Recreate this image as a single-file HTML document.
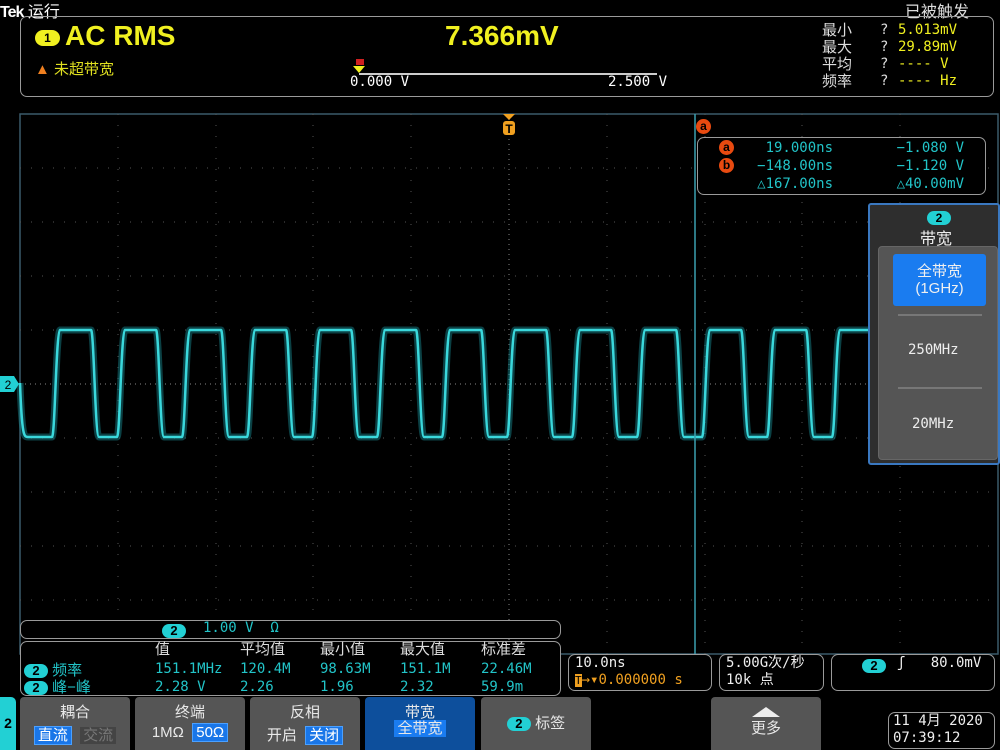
<!DOCTYPE html>
<html><head><meta charset="utf-8"><style>
*{margin:0;padding:0;box-sizing:border-box}
body{width:1000px;height:750px;background:#000;overflow:hidden;position:relative;font-family:"Liberation Sans","Noto Sans CJK SC",sans-serif;color:#ddd}
.a{position:absolute;white-space:nowrap}
.box{position:absolute;border:1.5px solid #9a9a9a;border-radius:7px}
.y{color:#f0f020}
.c{color:#22c4c8}
.pill{display:inline-block;background:#22d0d4;color:#000;border-radius:8px;font-weight:bold;text-align:center;font-size:13px;line-height:14px;width:24px}
.btn{position:absolute;top:697px;height:53px;background:#555;border-radius:4px 4px 0 0;color:#e8e8e8;font-size:15px;text-align:center}
.sel{background:#1976e8;color:#fff;border:1px solid #4aa0ff;padding:0 3px}
.mono{font-family:"DejaVu Sans Mono","Liberation Mono",monospace}
.cur{position:absolute;width:15px;height:15px;border-radius:50%;background:#e84a10;color:#000;font-weight:bold;font-size:12px;text-align:center;line-height:14px}
</style></head><body>
<div class="a" style="left:0;top:-2px;font-size:16px;color:#fff"><b style="letter-spacing:-1px">Tek</b> 运行</div>
<div class="a" style="left:905px;top:-2px;font-size:16px;color:#ddd">已被触发</div>
<div class="box" style="left:20px;top:16px;width:974px;height:81px"></div>
<div class="a y" style="left:35px;top:30px;width:25px;height:16px;background:#f0f020;border-radius:8px;color:#000;font-size:12px;text-align:center;font-weight:bold;line-height:16px">1</div>
<div class="a y" style="left:65px;top:20px;font-size:28px;font-weight:bold">AC RMS</div>
<div class="a y" style="left:445px;top:20px;font-size:28px;font-weight:bold">7.366mV</div>
<div class="a" style="left:35px;top:58px;font-size:15px;color:#e0e020"><span style="color:#f08020">▲</span> 未超带宽</div>
<div class="a" style="left:356px;top:59px;width:8px;height:6px;background:#d02020"></div>
<div class="a" style="left:353px;top:66px;width:0;height:0;border-left:6px solid transparent;border-right:6px solid transparent;border-top:7px solid #f0f020"></div>
<div class="a" style="left:359px;top:73px;width:298px;height:2px;background:#ccc"></div>
<div class="a mono" style="left:350px;top:74px;font-size:14px;color:#fff">0.000 V</div>
<div class="a mono" style="left:608px;top:74px;font-size:14px;color:#fff">2.500 V</div>
<div class="a" style="left:822px;top:22px;font-size:15px;line-height:17px;color:#ddd">最小<br>最大<br>平均<br>频率</div>
<div class="a mono" style="left:880px;top:22px;font-size:14px;line-height:17px;color:#ddd">?<br>?<br>?<br>?</div>
<div class="a mono y" style="left:898px;top:22px;font-size:14px;line-height:17px">5.013mV<br>29.89mV<br>---- V<br>---- Hz</div>
<svg class="a" style="left:0;top:0" width="1000" height="750">
<defs>
<path id="w" fill="none" d="M20,383 C22,437 24,437 28,437 L52,437 C55,437 56,332 60,330 L91,330 C94,330 95,437 99,437 L117,437 C120,437 121,332 125,330 L156,330 C159,330 160,437 164,437 L182,437 C185,437 186,332 190,330 L221,330 C224,330 225,437 229,437 L247,437 C250,437 251,332 255,330 L286,330 C289,330 290,437 294,437 L312,437 C315,437 316,332 320,330 L351,330 C354,330 355,437 359,437 L377,437 C380,437 381,332 385,330 L416,330 C419,330 420,437 424,437 L442,437 C445,437 446,332 450,330 L481,330 C484,330 485,437 489,437 L507,437 C510,437 511,332 515,330 L546,330 C549,330 550,437 554,437 L572,437 C575,437 576,332 580,330 L611,330 C614,330 615,437 619,437 L637,437 C640,437 641,332 645,330 L676,330 C679,330 680,437 684,437 L702,437 C705,437 706,332 710,330 L741,330 C744,330 745,437 749,437 L767,437 C770,437 771,332 775,330 L806,330 C809,330 810,437 814,437 L832,437 C835,437 836,332 840,330 L871,330"/>
</defs>
<rect x="20" y="114" width="978" height="540" fill="none" stroke="#3a5a6a" stroke-width="1.5"/>
<g stroke="#555" stroke-width="1" stroke-dasharray="1 10">
<line x1="118" y1="114" x2="118" y2="654"/><line x1="216" y1="114" x2="216" y2="654"/><line x1="313" y1="114" x2="313" y2="654"/><line x1="411" y1="114" x2="411" y2="654"/><line x1="607" y1="114" x2="607" y2="654"/><line x1="705" y1="114" x2="705" y2="654"/><line x1="802" y1="114" x2="802" y2="654"/><line x1="900" y1="114" x2="900" y2="654"/>
<line x1="20" y1="168" x2="998" y2="168"/><line x1="20" y1="222" x2="998" y2="222"/><line x1="20" y1="276" x2="998" y2="276"/><line x1="20" y1="330" x2="998" y2="330"/><line x1="20" y1="438" x2="998" y2="438"/><line x1="20" y1="492" x2="998" y2="492"/><line x1="20" y1="546" x2="998" y2="546"/><line x1="20" y1="600" x2="998" y2="600"/>
</g>
<g stroke="#888" stroke-width="1" stroke-dasharray="1 4">
<line x1="509" y1="114" x2="509" y2="654"/><line x1="20" y1="384" x2="998" y2="384"/>
</g>
<use href="#w" stroke="#168088" stroke-width="7" opacity="0.5"/>
<use href="#w" stroke="#3ad8dc" stroke-width="2.5"/>
<line x1="695" y1="114" x2="695" y2="654" stroke="#3aa0b0" stroke-width="1.5"/>
<path d="M503,114 L515,114 L509,120Z" fill="#f0a020"/>
<rect x="503" y="121" width="12" height="14" rx="3" fill="#f0a020"/>
<text x="509" y="133" font-size="12" font-weight="bold" text-anchor="middle" fill="#000" font-family="Liberation Sans">T</text>
<path d="M0,376 L14,376 L19,384 L14,392 L0,392Z" fill="#22d0d4"/>
<text x="8" y="389" font-size="12" text-anchor="middle" fill="#000" font-family="Liberation Sans">2</text>
</svg>
<div class="cur" style="left:696px;top:119px">a</div>
<div class="box" style="left:697px;top:137px;width:289px;height:58px;background:#000"></div>
<div class="cur" style="left:719px;top:140px">a</div>
<div class="cur" style="left:719px;top:158px">b</div>
<div class="a c mono" style="left:750px;top:139px;font-size:14px;line-height:18px;text-align:right;width:83px">19.000ns<br>−148.00ns<br>△167.00ns</div>
<div class="a c mono" style="left:880px;top:139px;font-size:14px;line-height:18px;text-align:right;width:84px">−1.080 V<br>−1.120 V<br>△40.00mV</div>
<div class="a" style="left:868px;top:203px;width:132px;height:262px;background:#2e2e2e;border:2px solid #3a78c0;border-radius:3px"></div>
<div class="a" style="left:927px;top:211px;width:24px;height:14px;border-radius:7px;background:#22d0d4;color:#000;font-size:12px;font-weight:bold;text-align:center;line-height:14px">2</div>
<div class="a" style="left:920px;top:225px;font-size:16px;color:#eee">带宽</div>
<div class="a" style="left:878px;top:246px;width:120px;height:214px;background:#555;border-radius:4px;border:1px solid #666"></div>
<div class="a" style="left:893px;top:254px;width:93px;height:52px;background:#1a7cf0;border-radius:3px;color:#f0f0f0;font-size:15px;text-align:center;line-height:17px;padding-top:9px">全带宽<br>(1GHz)</div>
<div class="a" style="left:898px;top:314px;width:84px;height:2px;background:#777"></div>
<div class="a" style="left:898px;top:387px;width:84px;height:2px;background:#777"></div>
<div class="a mono" style="left:908px;top:342px;font-size:14px;color:#eee">250MHz</div>
<div class="a mono" style="left:912px;top:416px;font-size:14px;color:#eee">20MHz</div>
<div class="box" style="left:20px;top:620px;width:541px;height:19px;background:#000"></div>
<div class="a" style="left:162px;top:622px"><span class="pill">2</span></div>
<div class="a c mono" style="left:203px;top:620px;font-size:14px">1.00 V &nbsp;Ω</div>
<div class="box" style="left:20px;top:641px;width:541px;height:55px;background:#000"></div>
<div class="a" style="left:24px;top:662px;line-height:17px"><span class="pill">2</span><span class="c" style="font-size:15px"> 频率</span><br><span class="pill">2</span><span class="c" style="font-size:15px"> 峰−峰</span></div>
<div class="a" style="left:155px;top:642px;font-size:15px;color:#ddd;line-height:16px">值</div>
<div class="a" style="left:240px;top:642px;font-size:15px;color:#ddd;line-height:16px">平均值</div>
<div class="a" style="left:320px;top:642px;font-size:15px;color:#ddd;line-height:16px">最小值</div>
<div class="a" style="left:400px;top:642px;font-size:15px;color:#ddd;line-height:16px">最大值</div>
<div class="a" style="left:481px;top:642px;font-size:15px;color:#ddd;line-height:16px">标准差</div>
<div class="a c mono" style="left:155px;top:660px;font-size:14px;line-height:18px">151.1MHz<br>2.28 V</div>
<div class="a c mono" style="left:240px;top:660px;font-size:14px;line-height:18px">120.4M<br>2.26</div>
<div class="a c mono" style="left:320px;top:660px;font-size:14px;line-height:18px">98.63M<br>1.96</div>
<div class="a c mono" style="left:400px;top:660px;font-size:14px;line-height:18px">151.1M<br>2.32</div>
<div class="a c mono" style="left:481px;top:660px;font-size:14px;line-height:18px">22.46M<br>59.9m</div>
<div class="box" style="left:568px;top:654px;width:144px;height:37px"></div>
<div class="a mono" style="left:575px;top:655px;font-size:14px;line-height:17px;color:#eee">10.0ns<br><span style="color:#f0a020"><span style="background:#f0a020;color:#000;font-size:11px">T</span>→▾0.000000 s</span></div>
<div class="box" style="left:719px;top:654px;width:105px;height:37px"></div>
<div class="a mono" style="left:726px;top:655px;font-size:14px;line-height:17px;color:#eee">5.00G次/秒<br>10k 点</div>
<div class="box" style="left:831px;top:654px;width:164px;height:37px"></div>
<div class="a" style="left:862px;top:657px"><span class="pill">2</span></div>
<div class="a mono" style="left:897px;top:655px;font-size:14px;color:#eee">ʃ &nbsp;&nbsp;80.0mV</div>
<div class="a" style="left:0;top:697px;width:16px;height:53px;background:#22d0d4;border-radius:0 5px 0 0;color:#000;font-weight:bold;font-size:14px;text-align:center;line-height:53px">2</div>
<div class="btn" style="left:20px;width:110px"><div style="margin-top:4px">耦合</div><div style="margin-top:2px"><span class="sel">直流</span> &nbsp;<span style="background:#444;color:#777;padding:0 3px">交流</span></div></div>
<div class="btn" style="left:135px;width:110px"><div style="margin-top:4px">终端</div><div style="margin-top:2px">1MΩ &nbsp;<span class="sel">50Ω</span></div></div>
<div class="btn" style="left:250px;width:110px"><div style="margin-top:4px">反相</div><div style="margin-top:2px">开启 &nbsp;<span class="sel">关闭</span></div></div>
<div class="btn" style="left:365px;width:110px;background:#0d4f9c"><div style="margin-top:8px;line-height:16px">带宽</div><div style="line-height:16px"><span style="background:#1a7cf0;padding:0 3px">全带宽</span></div></div>
<div class="btn" style="left:481px;width:110px;line-height:53px;height:53px"><span class="pill">2</span> 标签</div>
<div class="btn" style="left:711px;width:110px"><div style="margin:10px auto 0;width:0;height:0;border-left:14px solid transparent;border-right:14px solid transparent;border-bottom:10px solid #eee"></div><div>更多</div></div>
<div class="box" style="left:888px;top:712px;width:107px;height:37px"></div>
<div class="a mono" style="left:893px;top:713px;font-size:14px;line-height:17px;color:#eee">11 4月 2020<br>07:39:12</div>
</body></html>
